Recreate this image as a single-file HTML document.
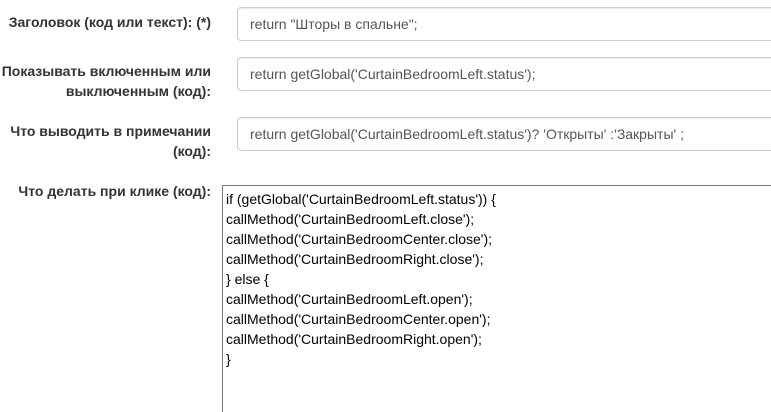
<!DOCTYPE html>
<html><head><meta charset="utf-8"><style>
html,body{margin:0;width:771px;height:412px;overflow:hidden;background:#fff;font-family:"Liberation Sans",Arial,sans-serif;position:relative}
.l{position:absolute;right:560px;text-align:right;font-weight:bold;font-size:14px;line-height:20px;color:#333;white-space:nowrap}
.i{position:absolute;left:237px;width:540px;height:32px;border:1px solid #ccc;border-radius:4px;box-sizing:content-box;font-size:14px;color:#555;line-height:32px;padding-left:12px;box-shadow:inset 0 1px 1px rgba(0,0,0,.075);white-space:nowrap}
.t{position:absolute;left:222px;top:185px;width:560px;height:240px;border:1px solid #767676;font-size:14px;line-height:20px;color:#000;padding:3px 0 0 3px;box-sizing:border-box;white-space:nowrap}
</style></head><body>
<div class="l" style="top:12px">Заголовок (код или текст): (*)</div>
<div class="i" style="top:7px">return "Шторы в спальне";</div>
<div class="l" style="top:61px">Показывать включенным или<br>выключенным (код):</div>
<div class="i" style="top:57px">return getGlobal('CurtainBedroomLeft.status');</div>
<div class="l" style="top:121px">Что выводить в примечании<br>(код):</div>
<div class="i" style="top:117px">return getGlobal('CurtainBedroomLeft.status')? 'Открыты' :'Закрыты' ;</div>
<div class="l" style="top:181px">Что делать при клике (код):</div>
<div class="t">if (getGlobal('CurtainBedroomLeft.status')) {<br>callMethod('CurtainBedroomLeft.close');<br>callMethod('CurtainBedroomCenter.close');<br>callMethod('CurtainBedroomRight.close');<br>} else {<br>callMethod('CurtainBedroomLeft.open');<br>callMethod('CurtainBedroomCenter.open');<br>callMethod('CurtainBedroomRight.open');<br>}</div>
</body></html>
